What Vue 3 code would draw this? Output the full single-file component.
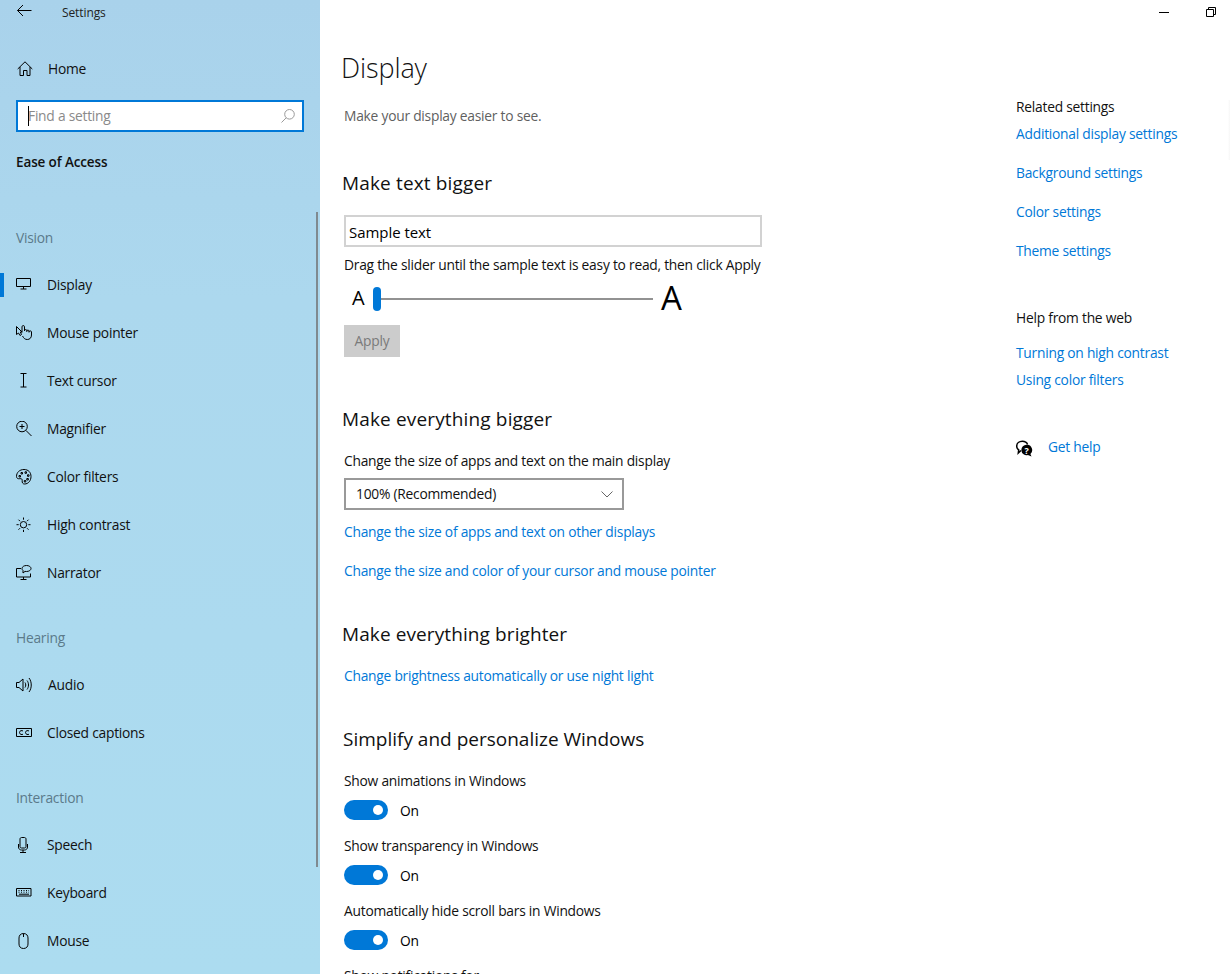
<script setup>
const visionItems = [
  { label: 'Display', active: true, paths: ['M.5 1.5h14v8H.5z', 'M7.5 9.500v2.500', 'M4.500 12h6'] },
  { label: 'Mouse pointer', paths: ['M.5 1.500v8l2-1.500 1.500 2.500 1.500-1-1.200-2.500H6z', 'M6 7.500V1.800c0-1.700 2.500-1.700 2.500 0V6', 'M8.500 5.500c0-1.200 2.300-1.200 2.300 0V7M10.800 6c0-1.200 2.200-1.200 2.200 0v1.500M13 6.800c0-1.200 2.500-1.200 2.500 0V10c0 2.800-1.800 4.500-4.200 4.500-2.300 0-3.300-1-4.800-3.500'] },
  { label: 'Text cursor', paths: ['M4.500 .5h6', 'M7.500 .5v13.500', 'M4.500 14h6'] },
  { label: 'Magnifier', paths: ['M6 .2a5.300 5.300 0 1 1 0 10.600A5.300 5.300 0 0 1 6 .2z', 'M3.500 5.500h5M6 3v5', 'M9.800 9.300l5.700 5.700'] },
  { label: 'Color filters', paths: ['M8 .5C3.500 .5.5 3.500.5 7.500c0 2 1.800 2.500 3.300 2.200 1.700-.3 2.700.5 2.400 2-.3 1.800.5 3.300 2.300 3.300 4 0 6.500-3.500 6.500-7.500S12.500 .5 8 .5z', 'M5 3.500h1.500v1.500H5zM9 2.800h1.500v1.500H9zM3 6.500h1.500V8H3zM11.500 5.800H13v1.500h-1.500zM10.800 9.500h1.500V11h-1.500zM8.300 11.500h1.500V13H8.300z'] },
  { label: 'High contrast', paths: ['M7.500 4.500a3.200 3.200 0 1 1 0 6.400 3.200 3.200 0 0 1 0-6.400z', 'M7.500 .5v2.200M7.500 12.800V15M.5 7.700h2.200M12.300 7.700h2.200M2.500 2.700L4 4.200M11 11.200l1.500 1.500M2.500 12.700L4 11.200M11 4.200l1.500-1.500'] },
  { label: 'Narrator', paths: ['M5 3.500H.5v8.500h14V8.500', 'M7.500 12v2.500M4.500 14.500h6', 'M10.500 .5c2.500 0 4.500 1.300 4.500 3s-2 3-4.500 3c-.5 0-1 0-1.500-.1L7 8V5.500C6.300 5 6 4.300 6 3.500c0-1.700 2-3 4.500-3z'] }
]
const hearingItems = [
  { label: 'Audio', wide: true, paths: ['M.5 5.500h2.500l4-3.500v12l-4-3.500H.5z', 'M9 5.500c1 1.500 1 3.500 0 5M11 3.500c2 2.500 2 6.500 0 9M13 1c3 3.800 3 10.200 0 14'] },
  { label: 'Closed captions', paths: ['M.5 3.500h15v8H.5z', 'M7 6c-1-.8-3.500-.5-3.500 1.500S6 10 7 9.200M13 6c-1-.8-3.500-.5-3.500 1.500S12 10 13 9.200'] }
]
const interactionItems = [
  { label: 'Speech', paths: ['M5.500 .5h3c.8 0 1.500.7 1.500 1.500v7.500c0 .8-.7 1.500-1.500 1.500h-3c-.8 0-1.500-.7-1.500-1.500V2c0-.8.7-1.500 1.500-1.500z', 'M2.500 7v3c0 2 1.500 3 3 3h3c1.500 0 3-1 3-3V7', 'M7 13v2.500M4 15.500h6'] },
  { label: 'Keyboard', paths: ['M.5 3.500h14.500v7.500H.5z', 'M2.500 5.500h1M5 5.500h1M7.500 5.500h1M10 5.500h1M12.500 5.500h.5M2.500 7.200h1M5 7.200h1M7.500 7.200h1M10 7.200h1M12.500 7.200h.5M3 9.200h10'] },
  { label: 'Mouse', paths: ['M7.500 .5c3 0 4.500 2 4.500 4.500v6c0 2.500-1.500 4.500-4.500 4.500S3 13.500 3 11V5C3 2.500 4.500 .5 7.500 .5z', 'M7.500 .5v3.500'] }
]
const toggles = ['Show animations in Windows', 'Show transparency in Windows', 'Automatically hide scroll bars in Windows']
const relatedLinks = ['Additional display settings', 'Background settings', 'Color settings', 'Theme settings']
const helpLinks = ['Turning on high contrast', 'Using color filters']
const groups = [
  { title: 'Vision', cls: 'g-vision', items: visionItems },
  { title: 'Hearing', cls: 'g-hearing', items: hearingItems },
  { title: 'Interaction', cls: 'g-interaction', items: interactionItems }
]
</script>

<template>
  <div class="window">
    <aside class="sidebar">
      <div class="titlebar">
        <svg class="back" width="16" height="16" viewBox="0 0 16 16"><path d="M7 2L1.500 7.500 7 13M1.500 7.500H15.500" /></svg>
        <span class="app-title">Settings</span>
      </div>
      <div class="home">
        <svg class="icon" width="16" height="16" viewBox="0 0 16 16"><path d="M.7 8L8 .8 15.300 8M3 6v8.500h3.500V9.500h3.500v5h3V6" /></svg>
        <span class="home-label">Home</span>
      </div>
      <div class="search">
        <span class="caret"></span>
        <span class="placeholder">Find a setting</span>
        <svg class="search-icon" width="14" height="14" viewBox="0 0 14 14"><path d="M8.500 .5a4.800 4.800 0 1 1 0 9.600 4.800 4.800 0 0 1 0-9.600zM5.200 8.800L.5 13.500" /></svg>
      </div>
      <div class="category">Ease of Access</div>
      <section v-for="g in groups" :key="g.title" class="group" :class="g.cls">
        <div class="group-title">{{ g.title }}</div>
        <div v-for="item in g.items" :key="item.label" class="nav-item" :class="{ active: item.active }">
          <svg class="icon" width="16" height="16" viewBox="0 0 16 16"><path v-for="d in item.paths" :key="d" :d="d" /></svg>
          <span :class="{ wide: item.wide }">{{ item.label }}</span>
        </div>
      </section>
      <div class="side-scroll"></div>
    </aside>

    <main class="main">
      <div class="content">
        <h1>Display</h1>
        <p class="subtitle">Make your display easier to see.</p>

        <h2 class="h-first">Make text bigger</h2>
        <div class="sample">Sample text</div>
        <div class="line drag">Drag the slider until the sample text is easy to read, then click Apply</div>
        <div class="slider-row">
          <span class="a-small">A</span>
          <div class="slider"><span class="thumb"></span></div>
          <span class="a-big">A</span>
        </div>
        <div class="apply">Apply</div>

        <h2 class="h-second">Make everything bigger</h2>
        <div class="line change">Change the size of apps and text on the main display</div>
        <div class="select">
          <span>100% (Recommended)</span>
          <svg width="12" height="7" viewBox="0 0 12 7"><path d="M.5 .5L6 6l5.500-5.500" /></svg>
        </div>
        <a class="link l1">Change the size of apps and text on other displays</a>
        <a class="link l2">Change the size and color of your cursor and mouse pointer</a>

        <h2 class="h-third">Make everything brighter</h2>
        <a class="link l3">Change brightness automatically or use night light</a>

        <h2 class="h-third h-last">Simplify and personalize Windows</h2>
        <div v-for="(t, i) in toggles" :key="t" class="toggle-block" :class="{ first: i === 0 }">
          <div class="line">{{ t }}</div>
          <div class="toggle-row">
            <span class="toggle"><span class="knob"></span></span>
            <span class="on">On</span>
          </div>
        </div>
        <div class="line clipped">Show notifications for</div>
      </div>

      <div class="right">
        <div class="controls">
          <span class="minimize"></span>
          <svg class="restore" width="10" height="10" viewBox="0 0 10 10"><path d="M.5 2.500h7v7h-7zM2.500 2.500V.5h7v7h-2" /></svg>
        </div>
        <div class="line rel-title">Related settings</div>
        <a v-for="(l, i) in relatedLinks" :key="l" class="link side-link" :class="{ tight: i === 0 }">{{ l }}</a>
        <div class="line help-title">Help from the web</div>
        <a class="link help-a">{{ helpLinks[0] }}</a>
        <a class="link help-b">{{ helpLinks[1] }}</a>
        <div class="get-help">
          <svg width="17" height="20" viewBox="0 0 17 20">
            <path class="thin" d="M5 13.500L2.300 16l.4-3.200C1.300 11.800.7 10.500.7 9.200.7 6.300 3.300 4.300 6.300 4.300c2.500 0 4.600 1.300 5.300 3.200" />
            <path class="solid" d="M11 7.800a5.200 5.200 0 0 1 3.400 9.100l1.100 2.600-3.600-1.500A5.200 5.200 0 1 1 11 7.800z" />
            <text x="8.600" y="16.500" class="q">?</text>
          </svg>
          <a class="link">Get help</a>
        </div>
      </div>
      <div class="main-scroll"></div>
    </main>
  </div>
</template>

<style>
html, body { margin: 0; background: #fff; overflow: hidden; }
</style>

<style scoped>
.window {
  width: 1230px;
  height: 974px;
  display: flex;
  overflow: hidden;
  background: #fff;
  color: #000;
  font-family: "Open Sans", "Noto Sans", sans-serif;
  font-size: 13.800px;
  letter-spacing: -0.24px;
}
svg path { fill: none; stroke: #000; stroke-width: 1; }

/* Sidebar */
.sidebar {
  position: relative;
  width: 320px;
  flex: none;
  height: 974px;
  overflow: hidden;
  background: linear-gradient(180deg, #a9d2eb 0, #acd8ee 300px, #acdcf0 974px);
  color: #111;
}
.titlebar { height: 24px; display: flex; align-items: center; padding-left: 16px; }
.back { margin-top: -2px; }
.app-title { margin-left: 30px; font-size: 12px; letter-spacing: -0.1px; color: #222; }
.home { margin-top: 21px; height: 48px; display: flex; align-items: center; padding-left: 17px; }
.home-label { margin-left: 15px; margin-top: -2px; }
.icon { flex: none; }
.search {
  position: relative;
  margin: 7px 16px 0;
  height: 32px;
  box-sizing: border-box;
  border: 2px solid #0078d7;
  background: #fff;
  display: flex;
  align-items: center;
  padding-left: 10px;
  justify-content: space-between;
  padding-right: 7px;
}
.caret { position: absolute; left: 10px; top: 4px; width: 1px; height: 20px; background: #000; }
.placeholder { color: #8a8a8a; margin-top: -2px; }
.search-icon path { stroke: #9a9a9a; }
.category { margin-top: 20px; height: 20px; line-height: 20px; padding-left: 16px; font-weight: 600; font-size: 13.500px; letter-spacing: -0.12px; }
.group-title { height: 20px; line-height: 20px; padding-left: 16px; color: #5b7a8a; margin-bottom: 13px; }
.g-vision { margin-top: 56px; }
.g-hearing { margin-top: 31px; }
.g-interaction { margin-top: 31px; }
.nav-item { position: relative; height: 48px; display: flex; align-items: center; padding-left: 16px; }
.nav-item span { margin-left: 15px; margin-top: -2px; }
.nav-item span.wide { margin-left: 16px; }
.nav-item.active::before { content: ""; position: absolute; left: 0; top: 12px; width: 4px; height: 24px; background: #0078d7; }
.side-scroll { position: absolute; left: 316px; top: 212px; width: 2px; height: 655px; background: #7f8a90; }

/* Main */
.main { position: relative; flex: 1; display: flex; min-width: 0; }
.content { width: 696px; flex: none; padding-left: 24px; box-sizing: border-box; }
h1 { margin: 48px 0 0 -3px; font-size: 27px; font-weight: 300; line-height: 40px; color: #111; letter-spacing: -0.1px; }
.subtitle { margin: 18px 0 0; line-height: 20px; color: #5f5f5f; }
h2 { margin: 0 0 0 -2px; font-size: 19px; font-weight: 400; line-height: 28px; color: #111; letter-spacing: 0.1px; }
.h-first { margin-top: 43px; letter-spacing: 0.15px; }
.h-second { margin-top: 48px; letter-spacing: 0.15px; }
.h-third { margin-top: 39px; }
.h-last { margin-left: -1px; letter-spacing: 0; }
.line { line-height: 20px; color: #111; white-space: nowrap; }
.sample {
  margin-top: 18px;
  width: 418px;
  height: 32px;
  box-sizing: border-box;
  border: 2px solid #d2d2d2;
  padding-left: 3px;
  line-height: 30px;
  font-size: 15px;
  letter-spacing: -0.05px;
}
.drag { margin-top: 8px; }
.slider-row { margin-top: 5px; height: 36px; display: flex; align-items: center; padding-left: 8px; }
.a-small { width: 21px; font-size: 20px; line-height: 36px; letter-spacing: 0; }
.slider { position: relative; width: 280px; height: 2px; margin-top: 2px; background: #929292; }
.thumb { position: absolute; left: 0; top: -11px; width: 8px; height: 24px; border-radius: 4px; background: #0078d7; }
.a-big { margin-left: 8px; font-size: 33px; line-height: 36px; }
.apply {
  margin-top: 9px;
  width: 56px;
  height: 32px;
  background: #cccccc;
  color: #7a7a7a;
  line-height: 32px;
  text-align: center;
}
.change { margin-top: 18px; }
.select {
  margin-top: 7px;
  width: 280px;
  height: 32px;
  box-sizing: border-box;
  border: 2px solid #999;
  display: flex;
  align-items: center;
  justify-content: space-between;
  padding: 0 9px 0 10px;
  color: #111;
}
.select span { margin-top: -2px; }
.select svg path { stroke: #666; }
.link { display: block; line-height: 20px; color: #0078d7; white-space: nowrap; }
.l1 { margin-top: 12px; }
.l2 { margin-top: 19px; }
.l3 { margin-top: 18px; }
.toggle-block { margin-top: 16px; }
.toggle-block.first { margin-top: 18px; }
.toggle-row { margin-top: 9px; height: 20px; display: flex; align-items: center; }
.toggle { position: relative; width: 44px; height: 20px; border-radius: 10px; background: #0078d7; }
.knob { position: absolute; right: 5px; top: 5px; width: 10px; height: 10px; border-radius: 50%; background: #fff; }
.on { margin-left: 12px; }
.clipped { margin-top: 16px; }

/* Right column */
.right { flex: 1; padding-left: 0; }
.controls { height: 24px; display: flex; align-items: center; justify-content: flex-end; padding-right: 14px; }
.minimize { width: 10px; height: 1px; background: #000; margin-right: 37px; }
.rel-title { margin-top: 73px; }
.side-link { margin-top: 19px; }
.side-link.tight { margin-top: 7px; }
.help-title { margin-top: 47px; }
.help-a { margin-top: 15px; }
.help-b { margin-top: 7px; }
.get-help { margin-top: 47px; height: 20px; display: flex; align-items: center; gap: 15px; }
.get-help svg { flex: none; }
.get-help svg path.thin { stroke: #000; stroke-width: 1.500; }
.get-help svg path.solid { fill: #000; stroke: none; }
.q { fill: #fff; font-size: 9px; font-weight: 700; letter-spacing: 0; }
.main-scroll { position: absolute; right: 0; top: 100px; width: 2px; height: 60px; background: linear-gradient(90deg, #fff, #f6f6f6); }
</style>
